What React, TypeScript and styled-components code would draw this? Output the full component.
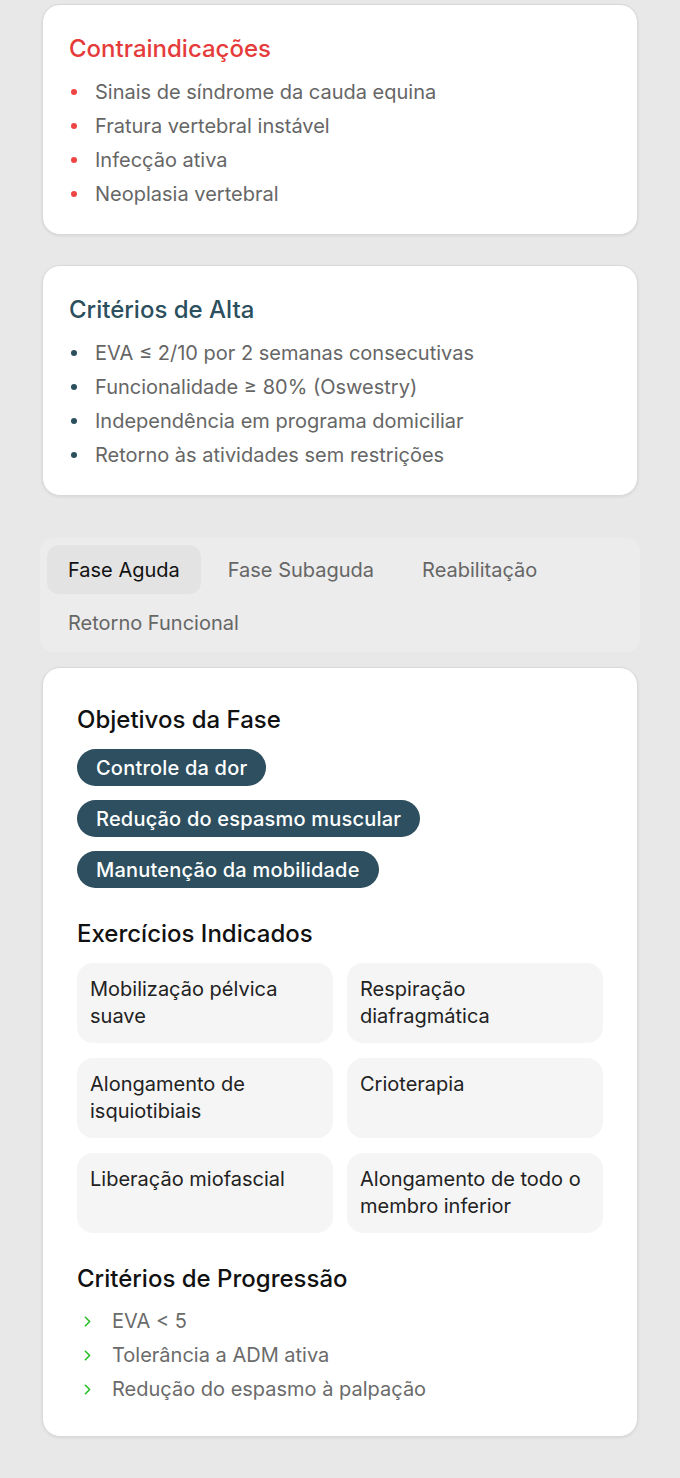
import styled, { createGlobalStyle } from "styled-components";
import { ChevronRight } from "lucide-react";

const GlobalStyle = createGlobalStyle`
  body {
    margin: 0;
    background: #e8e8e8;
    font-family: "Inter", "Noto Sans", sans-serif;
    -webkit-font-smoothing: antialiased;
  }
`;

const Page = styled.div`
  padding: 4px 40px 42px;
  display: flex;
  flex-direction: column;
`;

const Card = styled.div<{ $pad?: string; $gap?: number }>`
  margin: 0 2px ${(p) => p.$gap ?? 30}px;
  background: #fff;
  border: 1px solid #d9d9d9;
  border-radius: 18px;
  box-shadow: 0 1px 3px rgba(0, 0, 0, 0.08);
  padding: ${(p) => p.$pad ?? "28px 26px 23px"};
`;

const CardTitle = styled.h2<{ $color: string }>`
  margin: 0 0 10px;
  font-size: 24px;
  line-height: 32px;
  font-weight: 500;
  color: ${(p) => p.$color};
`;

const BulletList = styled.ul`
  list-style: none;
  margin: 0;
  padding: 0;
`;

const BulletItem = styled.li<{ $dot: string }>`
  display: flex;
  align-items: center;
  font-size: 20px;
  line-height: 34px;
  color: #666;

  &::before {
    content: "";
    width: 6px;
    height: 6px;
    border-radius: 50%;
    background: ${(p) => p.$dot};
    margin: 0 18px 0 2px;
    flex-shrink: 0;
  }
`;

const Tabs = styled.div`
  margin: 42px 0 15px;
  background: #ececec;
  border-radius: 14px;
  padding: 7px 7px 5px;
  display: flex;
  flex-wrap: wrap;
  gap: 4px 6px;
`;

const Tab = styled.div<{ $active?: boolean }>`
  height: 49px;
  display: flex;
  align-items: center;
  padding: 0 21px;
  border-radius: 12px;
  font-size: 20px;
  background: ${(p) => (p.$active ? "#e3e3e3" : "transparent")};
  color: ${(p) => (p.$active ? "#111" : "#666")};
`;

const SectionTitle = styled.h3<{ $top?: number; $bottom?: number }>`
  margin: ${(p) => p.$top ?? 0}px 0 ${(p) => p.$bottom ?? 14}px;
  font-size: 24px;
  line-height: 30px;
  font-weight: 500;
  color: #111;
`;

const Chips = styled.div`
  display: flex;
  flex-direction: column;
  align-items: flex-start;
  gap: 14px;
`;

const Chip = styled.span`
  height: 37px;
  display: inline-flex;
  align-items: center;
  padding: 0 19px;
  border-radius: 999px;
  background: #2d4f5f;
  color: #fff;
  font-size: 20px;
  font-weight: 500;
  letter-spacing: 0.2px;
`;

const Grid = styled.div`
  display: grid;
  grid-template-columns: 1fr 1fr;
  gap: 15px 14px;
`;

const Exercise = styled.div`
  height: 80px;
  box-sizing: border-box;
  padding: 13px;
  background: #f5f5f5;
  border-radius: 16px;
  font-size: 20px;
  line-height: 27px;
  color: #222;
`;

const ProgressItem = styled.div`
  display: flex;
  align-items: center;
  font-size: 20px;
  line-height: 34px;
  color: #6b6b6b;

  svg {
    margin: 0 16px 0 2px;
    color: #22bf22;
    flex-shrink: 0;
  }
`;

const contraindications = [
  "Sinais de síndrome da cauda equina",
  "Fratura vertebral instável",
  "Infecção ativa",
  "Neoplasia vertebral",
];

const discharge = [
  "EVA ≤ 2/10 por 2 semanas consecutivas",
  "Funcionalidade ≥ 80% (Oswestry)",
  "Independência em programa domiciliar",
  "Retorno às atividades sem restrições",
];

const tabs = ["Fase Aguda", "Fase Subaguda", "Reabilitação", "Retorno Funcional"];

const goals = ["Controle da dor", "Redução do espasmo muscular", "Manutenção da mobilidade"];

const exercises = [
  "Mobilização pélvica suave",
  "Respiração diafragmática",
  "Alongamento de isquiotibiais",
  "Crioterapia",
  "Liberação miofascial",
  "Alongamento de todo o membro inferior",
];

const progression = ["EVA < 5", "Tolerância a ADM ativa", "Redução do espasmo à palpação"];

const App = () => {
  return (
    <Page>
      <GlobalStyle />
      <Card>
        <CardTitle $color="#e53b3b">Contraindicações</CardTitle>
        <BulletList>
          {contraindications.map((item) => (
            <BulletItem key={item} $dot="#ef4444">
              {item}
            </BulletItem>
          ))}
        </BulletList>
      </Card>
      <Card $gap={0}>
        <CardTitle $color="#2c4f5e">Critérios de Alta</CardTitle>
        <BulletList>
          {discharge.map((item) => (
            <BulletItem key={item} $dot="#2c4f5e">
              {item}
            </BulletItem>
          ))}
        </BulletList>
      </Card>
      <Tabs>
        {tabs.map((t, i) => (
          <Tab key={t} $active={i === 0}>
            {t}
          </Tab>
        ))}
      </Tabs>
      <Card $pad="37px 34px 30px" $gap={0}>
        <SectionTitle>Objetivos da Fase</SectionTitle>
        <Chips>
          {goals.map((g) => (
            <Chip key={g}>{g}</Chip>
          ))}
        </Chips>
        <SectionTitle $top={31}>Exercícios Indicados</SectionTitle>
        <Grid>
          {exercises.map((e) => (
            <Exercise key={e}>{e}</Exercise>
          ))}
        </Grid>
        <SectionTitle $top={31} $bottom={10}>
          Critérios de Progressão
        </SectionTitle>
        {progression.map((p) => (
          <ProgressItem key={p}>
            <ChevronRight size={17} strokeWidth={2.2} />
            {p}
          </ProgressItem>
        ))}
      </Card>
    </Page>
  );
};

export default App;
